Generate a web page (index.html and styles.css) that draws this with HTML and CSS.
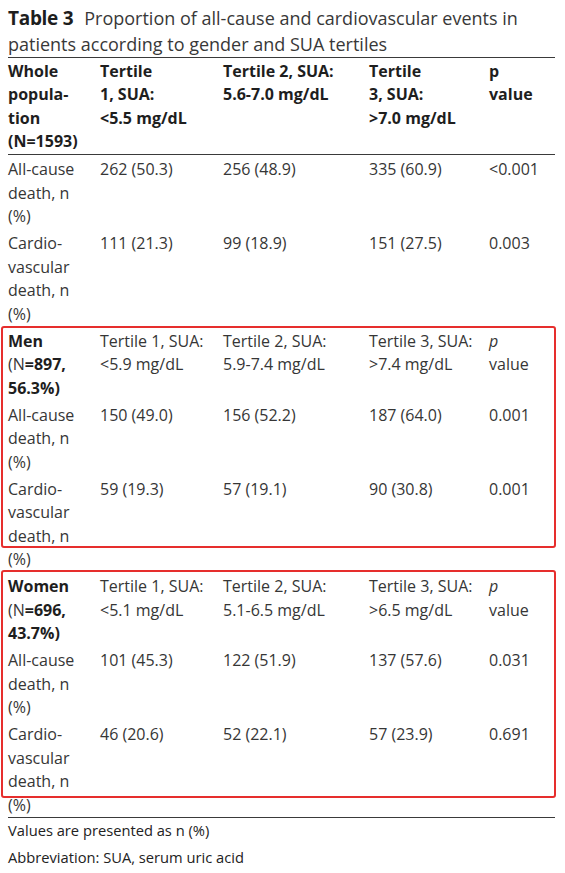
FILE: index.html
```html
<!DOCTYPE html>
<html lang="en">
<head>
<meta charset="utf-8">
<title>Table 3</title>
<link rel="stylesheet" href="styles.css">
</head>
<body>
<div class="sheet">
  <h1 class="title"><span class="title-label">Table 3</span>Proportion of all-cause and cardiovascular events in<br>patients according to gender and SUA tertiles</h1>
  <table class="data">
    <colgroup>
      <col class="c1"><col class="c2"><col class="c3"><col class="c4"><col class="c5">
    </colgroup>
    <thead>
      <tr class="head">
        <th>Whole<br>popula-<br>tion<br>(N=1593)</th>
        <th>Tertile<br>1, SUA:<br>&lt;5.5 mg/dL</th>
        <th>Tertile 2, SUA:<br>5.6-7.0 mg/dL</th>
        <th>Tertile<br>3, SUA:<br>&gt;7.0 mg/dL</th>
        <th>p<br>value</th>
      </tr>
    </thead>
    <tbody>
      <tr>
        <td>All-cause<br>death, n<br>(%)</td><td>262 (50.3)</td><td>256 (48.9)</td><td>335 (60.9)</td><td>&lt;0.001</td>
      </tr>
      <tr>
        <td>Cardio-<br>vascular<br>death, n<br>(%)</td><td>111 (21.3)</td><td>99 (18.9)</td><td>151 (27.5)</td><td>0.003</td>
      </tr>
      <tr>
        <td><b>Men</b><br>(N<b>=897,<br>56.3%)</b></td><td>Tertile 1, SUA:<br>&lt;5.9 mg/dL</td><td>Tertile 2, SUA:<br>5.9-7.4 mg/dL</td><td>Tertile 3, SUA:<br>&gt;7.4 mg/dL</td><td><i>p</i><br>value</td>
      </tr>
      <tr>
        <td>All-cause<br>death, n<br>(%)</td><td>150 (49.0)</td><td>156 (52.2)</td><td>187 (64.0)</td><td>0.001</td>
      </tr>
      <tr>
        <td>Cardio-<br>vascular<br>death, n<br>(%)</td><td>59 (19.3)</td><td>57 (19.1)</td><td>90 (30.8)</td><td>0.001</td>
      </tr>
      <tr>
        <td><b>Women</b><br>(N<b>=696,<br>43.7%)</b></td><td>Tertile 1, SUA:<br>&lt;5.1 mg/dL</td><td>Tertile 2, SUA:<br>5.1-6.5 mg/dL</td><td>Tertile 3, SUA:<br>&gt;6.5 mg/dL</td><td><i>p</i><br>value</td>
      </tr>
      <tr>
        <td>All-cause<br>death, n<br>(%)</td><td>101 (45.3)</td><td>122 (51.9)</td><td>137 (57.6)</td><td>0.031</td>
      </tr>
      <tr>
        <td>Cardio-<br>vascular<br>death, n<br>(%)</td><td>46 (20.6)</td><td>52 (22.1)</td><td>57 (23.9)</td><td>0.691</td>
      </tr>
    </tbody>
  </table>
  <div class="notes">
    <p>Values are presented as n (%)</p>
    <p>Abbreviation: SUA, serum uric acid</p>
  </div>
  <div class="mark mark-men"></div>
  <div class="mark mark-women"></div>
</div>
</body>
</html>
```
FILE: styles.css
```css
html, body {
  margin: 0;
  padding: 0;
  background: #ffffff;
}

.sheet {
  position: relative;
  padding: 0 10px 0 8px;
  font-family: "Open Sans", "Noto Sans", sans-serif;
  color: #363636;
}

.title {
  margin: 0;
  padding-top: 5px;
  font-size: 18px;
  font-weight: 400;
  line-height: 26px;
  color: #383838;
  border-bottom: 1px solid #3a3a3a;
}

.title-label {
  font-size: 19px;
  font-weight: 700;
  color: #1e1e1e;
  margin-right: 11px;
  letter-spacing: -0.3px;
}

.data {
  width: 547px;
  border-collapse: collapse;
  table-layout: fixed;
  font-size: 16px;
  line-height: 23.4px;
  border-bottom: 1px solid #3a3a3a;
}

.c1 { width: 92px; }
.c2 { width: 123px; }
.c3 { width: 146px; }
.c4 { width: 120px; }
.c5 { width: 66px; }

.data th,
.data td {
  padding: 3.8px 0 0 0;
  text-align: left;
  vertical-align: top;
  white-space: nowrap;
}

.data th {
  font-weight: 700;
  color: #1e1e1e;
}

.head th {
  padding-top: 2px;
  border-bottom: 1px solid #3a3a3a;
}

.data b {
  font-weight: 700;
  color: #1e1e1e;
}

.data i {
  font-style: italic;
}

.notes {
  padding-top: 2px;
  font-size: 14.7px;
  line-height: 20px;
  color: #222222;
}

.notes p {
  margin: 0 0 6.7px 0;
}

.mark {
  position: absolute;
  left: 1px;
  width: 555px;
  box-sizing: border-box;
  border: 2px solid #e62e2d;
  border-radius: 3px;
}

.mark-men {
  top: 326px;
  height: 222px;
}

.mark-women {
  top: 569.5px;
  height: 228px;
}
```
